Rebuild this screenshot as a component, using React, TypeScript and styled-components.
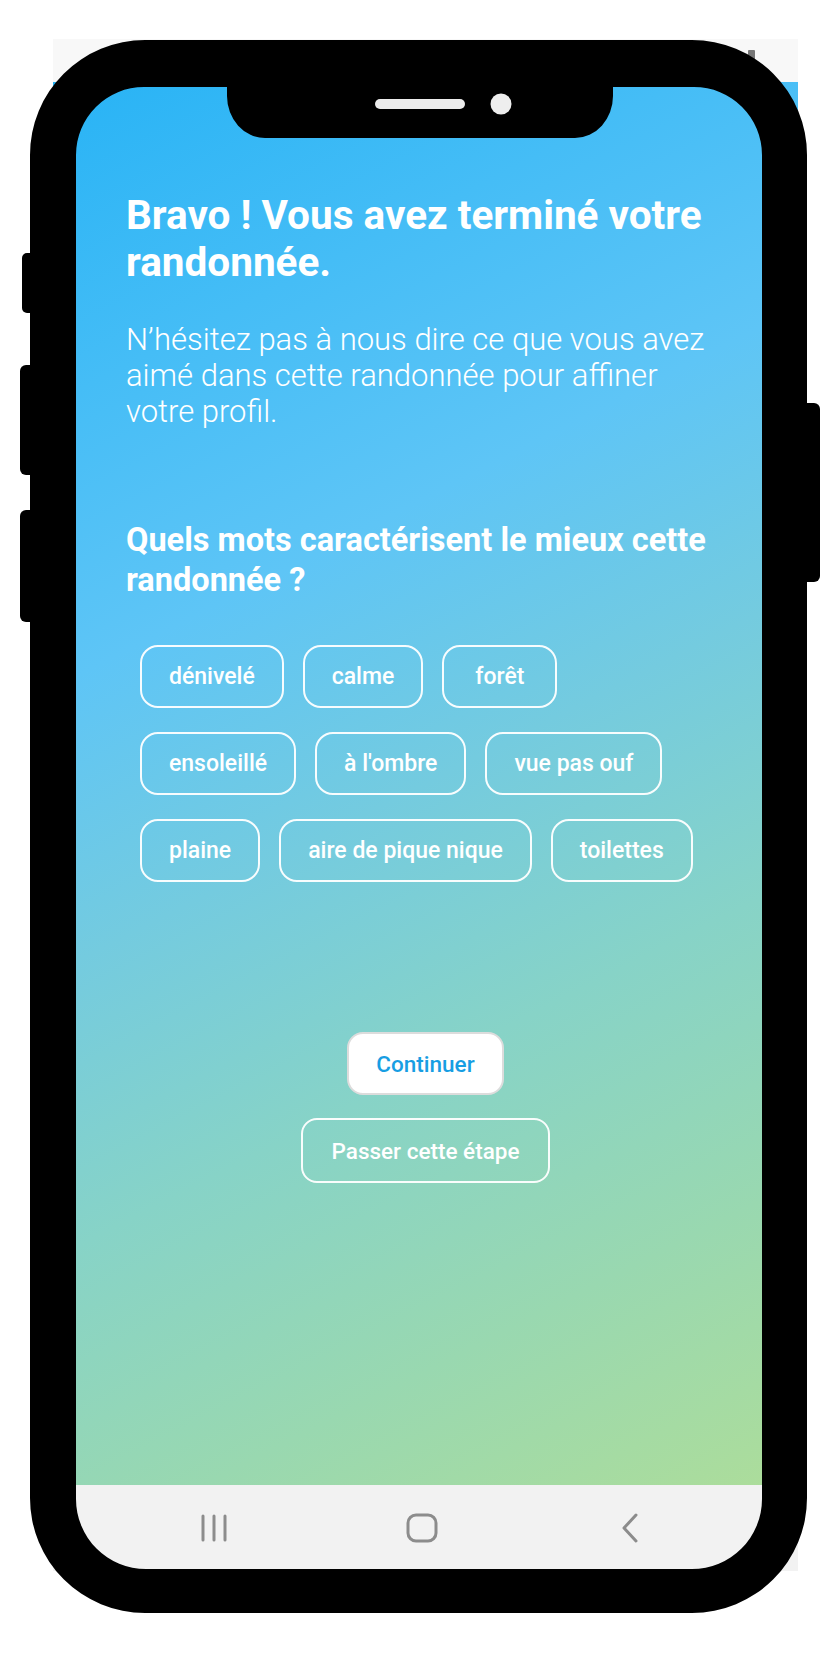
import React from "react";
import styled, { createGlobalStyle } from "styled-components";

const GlobalStyle = createGlobalStyle`
  html, body { margin: 0; padding: 0; background: #ffffff; }
  body { font-family: Roboto, "Noto Sans", "Liberation Sans", sans-serif; }
  * { box-sizing: border-box; }
`;

const Page = styled.div`
  position: relative;
  width: 840px;
  height: 1680px;
  padding: 39px 0 0 53px;
`;

const Backdrop = styled.div`
  width: 745px;
  height: 1532px;
  display: flex;
  flex-direction: column;
`;

const StatusBar = styled.div`
  height: 43px;
  background: #f8f8f8;
  display: flex;
  justify-content: flex-end;
  align-items: flex-start;
  padding: 11px 43px 0 0;
`;

const StatusIcon = styled.div`
  width: 7px;
  height: 11px;
  border-radius: 1px;
  background: #777777;
`;

const AppScreen = styled.main`
  flex: 1;
  display: flex;
  flex-direction: column;
  padding: 110px 73px 0;
  background: linear-gradient(
    153deg,
    #28b3f5 0%,
    #45bdf6 18%,
    #5ec5f6 34%,
    #74cbdf 50%,
    #87d3c7 66%,
    #99d8b0 83%,
    #addd9a 100%
  );
  color: #ffffff;
`;

const Title = styled.h1`
  margin: 0;
  font-size: 40.5px;
  line-height: 47px;
  font-weight: 700;
`;

const Lead = styled.p`
  margin: 36px 0 0;
  font-size: 31px;
  line-height: 36px;
  font-weight: 300;
`;

const Question = styled.h2`
  margin: 90px 0 0;
  font-size: 32.5px;
  line-height: 40px;
  font-weight: 700;
`;

const ChipList = styled.div`
  margin: 45px 14px 0;
  display: flex;
  flex-wrap: wrap;
  gap: 24px 19px;
`;

const Chip = styled.button`
  min-width: 115px;
  height: 63px;
  padding: 0 27px;
  border: 2px solid rgba(255, 255, 255, 0.95);
  border-radius: 18px;
  background: transparent;
  color: #ffffff;
  font-family: inherit;
  font-size: 23px;
  font-weight: 500;
`;

const Actions = styled.div`
  margin-top: 150px;
  display: flex;
  flex-direction: column;
  align-items: center;
  gap: 23px;
`;

const ActionButton = styled.button<{ $primary?: boolean }>`
  height: ${(p) => (p.$primary ? "63px" : "65px")};
  padding: 0 ${(p) => (p.$primary ? "27px" : "29px")};
  border-radius: 16px;
  border: 2px solid ${(p) => (p.$primary ? "#dcdcdc" : "rgba(255,255,255,0.95)")};
  background: ${(p) => (p.$primary ? "#ffffff" : "transparent")};
  color: ${(p) => (p.$primary ? "#179ee3" : "#ffffff")};
  font-family: inherit;
  font-size: 22.5px;
  font-weight: 500;
`;

const NavBar = styled.nav`
  height: 86px;
  background: #f2f2f2;
  display: grid;
  grid-template-columns: repeat(3, 208px);
  justify-content: center;
  justify-items: center;
  align-items: center;
  padding-right: 7px;
`;

const NavIcon = styled.svg`
  display: block;
`;

const Frame = styled.svg`
  position: absolute;
  top: 0;
  left: 0;
  pointer-events: none;
`;

const outer =
  "M145 40 H692 A115 115 0 0 1 807 155 V1498 A115 115 0 0 1 692 1613 H145 A115 115 0 0 1 30 1498 V155 A115 115 0 0 1 145 40 Z";
const hole =
  "M144 87 H227 V96 A38 42 0 0 0 265 138 H575 A38 42 0 0 0 613 96 V87 H694 A68 68 0 0 1 762 155 V1499 A70 70 0 0 1 692 1569 H146 A70 70 0 0 1 76 1499 V155 A68 68 0 0 1 144 87 Z";

const chips = [
  "dénivelé",
  "calme",
  "forêt",
  "ensoleillé",
  "à l'ombre",
  "vue pas ouf",
  "plaine",
  "aire de pique nique",
  "toilettes",
];

export default function App() {
  return (
    <>
      <GlobalStyle />
      <Page>
        <Backdrop>
          <StatusBar>
            <StatusIcon />
          </StatusBar>
          <AppScreen>
            <Title>Bravo ! Vous avez terminé votre randonnée.</Title>
            <Lead>
              N’hésitez pas à nous dire ce que vous avez aimé dans cette
              randonnée pour affiner votre profil.
            </Lead>
            <Question>Quels mots caractérisent le mieux cette randonnée ?</Question>
            <ChipList>
              {chips.map((c) => (
                <Chip key={c}>{c}</Chip>
              ))}
            </ChipList>
            <Actions>
              <ActionButton $primary>Continuer</ActionButton>
              <ActionButton>Passer cette étape</ActionButton>
            </Actions>
          </AppScreen>
          <NavBar>
            <NavIcon width="28" height="30" viewBox="0 0 28 30">
              <g stroke="#8c8c8c" strokeWidth="3" strokeLinecap="round">
                <line x1="3" y1="3" x2="3" y2="27" />
                <line x1="14" y1="3" x2="14" y2="27" />
                <line x1="25" y1="3" x2="25" y2="27" />
              </g>
            </NavIcon>
            <NavIcon width="32" height="30" viewBox="0 0 32 30">
              <rect x="2" y="2" width="28" height="26" rx="8" fill="none" stroke="#8c8c8c" strokeWidth="3" />
            </NavIcon>
            <NavIcon width="18" height="30" viewBox="0 0 18 30">
              <polyline points="15,2 3,15 15,28" fill="none" stroke="#8c8c8c" strokeWidth="3" strokeLinecap="round" strokeLinejoin="round" />
            </NavIcon>
          </NavBar>
        </Backdrop>
        <Frame width="840" height="1680" viewBox="0 0 840 1680">
          <rect x="22" y="253" width="20" height="60" rx="5" fill="#000" />
          <rect x="20" y="365" width="22" height="110" rx="6" fill="#000" />
          <rect x="20" y="510" width="22" height="112" rx="6" fill="#000" />
          <rect x="795" y="403" width="25" height="179" rx="6" fill="#000" />
          <path d={`${outer} ${hole}`} fill="#000" fillRule="evenodd" />
          <rect x="375" y="99" width="90" height="10" rx="5" fill="#ececec" />
          <circle cx="501" cy="104" r="10.5" fill="#eeeeee" />
        </Frame>
      </Page>
    </>
  );
}
